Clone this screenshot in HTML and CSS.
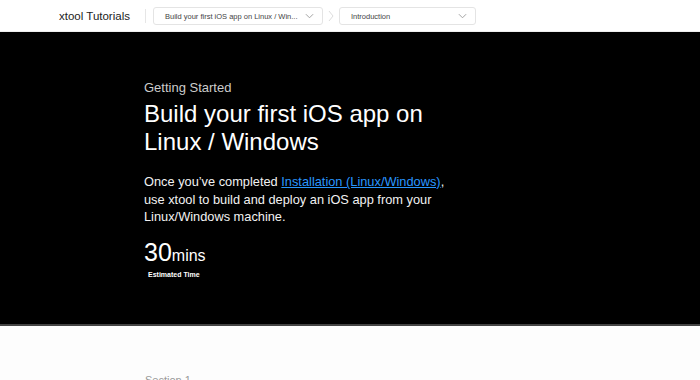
FILE: index.html
```html
<!DOCTYPE html>
<html lang="en">
<head>
    <meta charset="UTF-8">
    <meta name="viewport" content="width=device-width, initial-scale=1.0">
    <title>xtool Tutorials</title>
    <link rel="stylesheet" href="styles.css">
</head>
<body>
    <div class="navbar">
        <span class="brand">xtool Tutorials</span>
        <span class="divider"></span>
        <div class="picker picker-wide">
            <span>Build your first iOS app on Linux / Win...</span>
            <svg class="chevron" viewBox="0 0 10 6" width="9" height="6"><path d="M1 1l4 4 4-4" fill="none" stroke="#999" stroke-width="1"/></svg>
        </div>
        <svg class="crumb" viewBox="0 0 6 12" width="6" height="12"><path d="M1 1l4 5-4 5" fill="none" stroke="#ddd" stroke-width="1"/></svg>
        <div class="picker picker-narrow">
            <span>Introduction</span>
            <svg class="chevron" viewBox="0 0 10 6" width="9" height="6"><path d="M1 1l4 4 4-4" fill="none" stroke="#999" stroke-width="1"/></svg>
        </div>
    </div>

    <div class="hero">
        <div class="hero-inner">
            <p class="eyebrow">Getting Started</p>
            <h1>Build your first iOS app on Linux / Windows</h1>
            <p class="intro">Once you’ve completed <a href="#">Installation (Linux/Windows)</a>, use xtool to build and deploy an iOS app from your Linux/Windows machine.</p>
            <div class="duration">
                <div class="duration-value">30<span>mins</span></div>
                <div class="duration-label">Estimated Time</div>
            </div>
        </div>
    </div>

    <div class="sections">
        <h2>Section 1</h2>
    </div>
</body>
</html>
```

FILE: styles.css
```css
* {
    margin: 0;
    padding: 0;
    box-sizing: border-box;
}

body {
    font-family: "Liberation Sans", Arial, sans-serif;
    background: #fdfdfd;
    height: 380px;
    overflow: hidden;
}

.navbar {
    height: 32px;
    background: #fff;
    display: flex;
    align-items: center;
    padding-left: 59px;
    border-bottom: 1px solid #eee;
}

.brand {
    font-size: 11.5px;
    color: #222;
    margin-right: 15px;
}

.divider {
    width: 1px;
    height: 14px;
    background: #e6e6e6;
    margin-right: 7px;
}

.picker {
    height: 18px;
    margin-top: 1px;
    border: 1px solid #e4e4e4;
    border-radius: 3px;
    display: flex;
    align-items: center;
    justify-content: space-between;
    padding: 0 8px 0 11px;
    font-size: 7.5px;
    color: #444;
}

.picker-wide {
    width: 170px;
}

.picker-narrow {
    width: 137px;
}

.crumb {
    margin: 0 5px 0 5px;
}

.hero {
    background: #000;
    height: 294px;
    border-bottom: 2px solid #444;
    color: #fff;
}

.hero-inner {
    padding: 48px 0 0 144px;
    width: 460px;
}

.eyebrow {
    font-size: 13px;
    color: #ccc;
    margin-bottom: 5px;
}

h1 {
    font-size: 24px;
    font-weight: 400;
    line-height: 28px;
    width: 300px;
    margin-bottom: 17px;
}

.intro {
    font-size: 12.8px;
    line-height: 17.5px;
    width: 305px;
    color: #f2f2f2;
}

.intro a {
    color: #2997ff;
}

.duration {
    margin-top: 13px;
}

.duration-value {
    font-size: 25px;
    line-height: 26px;
}

.duration-value span {
    font-size: 16px;
}

.duration-label {
    font-size: 7px;
    font-weight: 700;
    margin: 2px 0 0 4px;
}

.sections {
    padding: 48px 0 0 145px;
}

.sections h2 {
    font-size: 11px;
    font-weight: 400;
    color: #999;
}
```
